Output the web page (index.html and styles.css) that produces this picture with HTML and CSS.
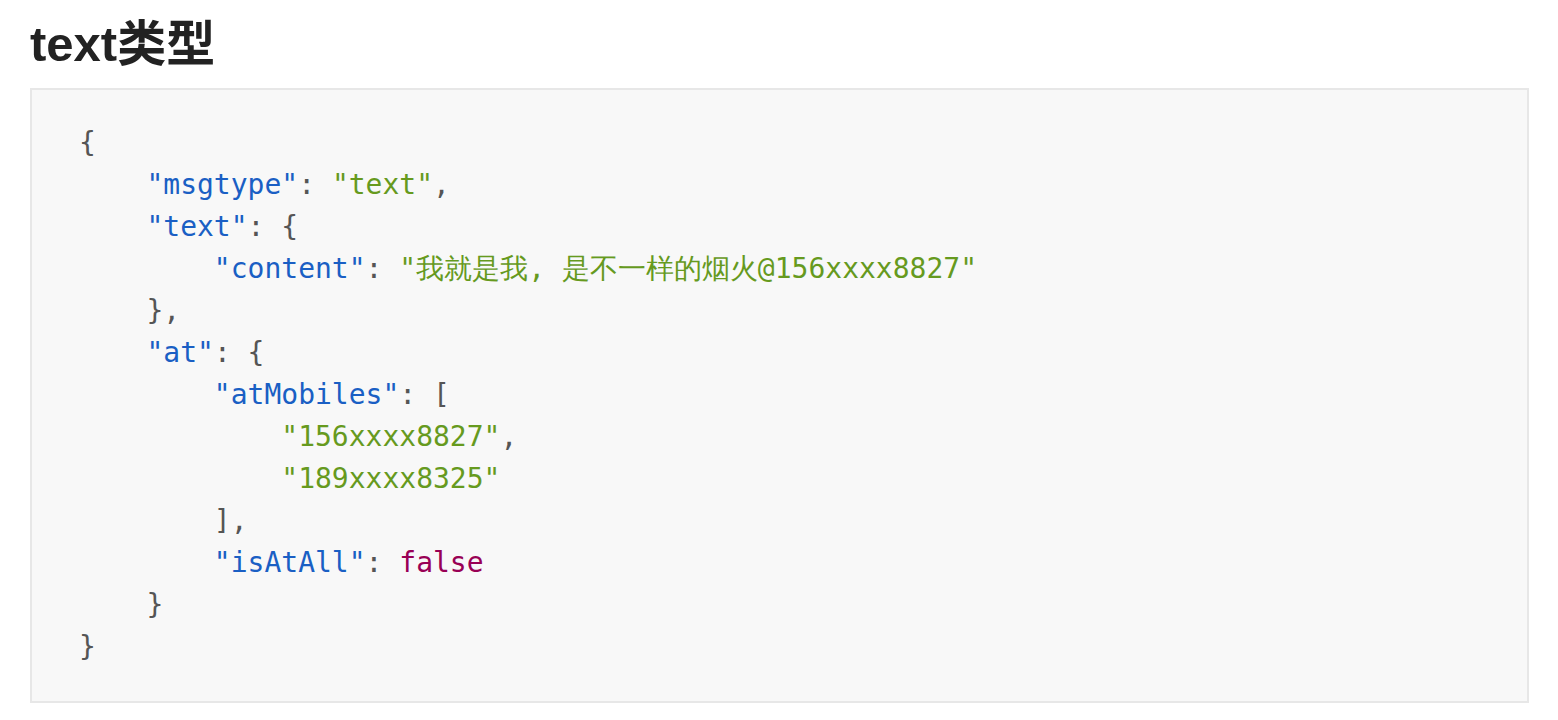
FILE: index.html
```html
<!DOCTYPE html>
<html lang="zh">
<head>
<meta charset="utf-8">
<title>text类型</title>
<link rel="stylesheet" href="styles.css">
</head>
<body>
<main class="page">
<h2 class="title">text类型</h2>
<pre class="code"><code><span class="p">{</span>
    <span class="k">"msgtype"</span><span class="p">:</span> <span class="s">"text"</span><span class="p">,</span>
    <span class="k">"text"</span><span class="p">: {</span>
        <span class="k">"content"</span><span class="p">:</span> <span class="s">"我就是我, 是不一样的烟火@156xxxx8827"</span>
    <span class="p">},</span>
    <span class="k">"at"</span><span class="p">: {</span>
        <span class="k">"atMobiles"</span><span class="p">: [</span>
            <span class="s">"156xxxx8827"</span><span class="p">,</span>
            <span class="s">"189xxxx8325"</span>
        <span class="p">],</span>
        <span class="k">"isAtAll"</span><span class="p">:</span> <span class="b">false</span>
    <span class="p">}</span>
<span class="p">}</span></code></pre>
</main>
</body>
</html>
```
FILE: styles.css
```css
html, body {
  margin: 0;
  padding: 0;
  background: #ffffff;
}
.page {
  padding: 14px 29px 0 30px;
  font-family: "Liberation Sans", Arial, "Noto Sans CJK SC", sans-serif;
}
.title {
  margin: 0 0 14px 0;
  font-size: 49px;
  line-height: 60px;
  font-weight: 700;
  color: #222222;
}
.code {
  margin: 0;
  background: #f8f8f8;
  border: 2px solid #e7e7e7;
  padding: 32px 47px 33px;
  font-family: "DejaVu Sans Mono", "Noto Sans CJK SC", monospace;
  font-size: 28px;
  line-height: 42px;
  color: #555555;
}
.k { color: #1a5fc4; }
.s { color: #669a1e; }
.b { color: #990055; }
.p { color: #555555; }
```
